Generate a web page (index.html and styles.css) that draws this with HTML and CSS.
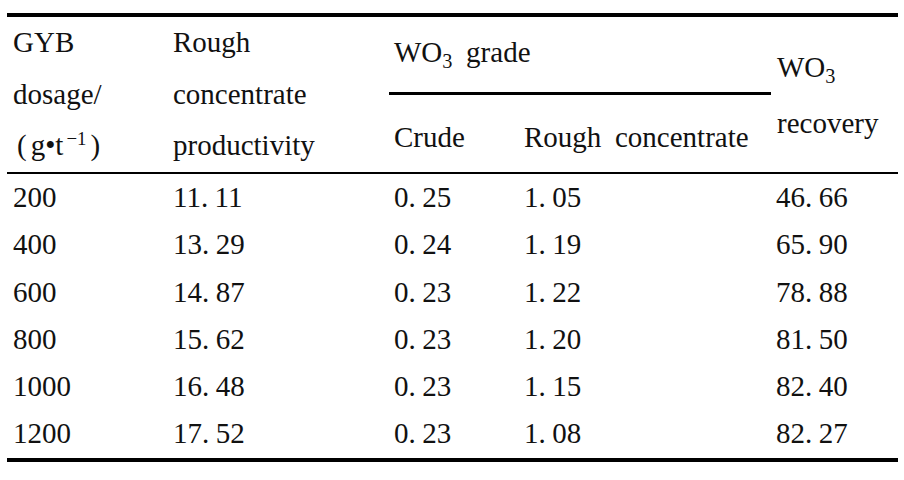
FILE: index.html
```html
<!DOCTYPE html>
<html>
<head>
<meta charset="utf-8">
<link rel="stylesheet" href="styles.css">
</head>
<body>
<div class="sheet">
  <div class="head">
    <div class="cell h-dose">GYB<br>dosage/<br><span class="paren">(</span>g•t<sup>−1</sup><span class="paren">)</span></div>
    <div class="cell h-prod">Rough<br>concentrate<br>productivity</div>
    <div class="cell h-group">WO<sub>3</sub> grade</div>
    <div class="cell h-rec">WO<sub>3</sub><br>recovery</div>
    <div class="cell h-sub h-crude">Crude</div>
    <div class="cell h-sub h-rough">Rough concentrate</div>
  </div>
  <div class="body">
    <div class="cell first">200</div><div class="cell">11<span class="d">.</span>11</div><div class="cell">0<span class="d">.</span>25</div><div class="cell">1<span class="d">.</span>05</div><div class="cell">46<span class="d">.</span>66</div>
    <div class="cell first">400</div><div class="cell">13<span class="d">.</span>29</div><div class="cell">0<span class="d">.</span>24</div><div class="cell">1<span class="d">.</span>19</div><div class="cell">65<span class="d">.</span>90</div>
    <div class="cell first">600</div><div class="cell">14<span class="d">.</span>87</div><div class="cell">0<span class="d">.</span>23</div><div class="cell">1<span class="d">.</span>22</div><div class="cell">78<span class="d">.</span>88</div>
    <div class="cell first">800</div><div class="cell">15<span class="d">.</span>62</div><div class="cell">0<span class="d">.</span>23</div><div class="cell">1<span class="d">.</span>20</div><div class="cell">81<span class="d">.</span>50</div>
    <div class="cell first">1000</div><div class="cell">16<span class="d">.</span>48</div><div class="cell">0<span class="d">.</span>23</div><div class="cell">1<span class="d">.</span>15</div><div class="cell">82<span class="d">.</span>40</div>
    <div class="cell first">1200</div><div class="cell">17<span class="d">.</span>52</div><div class="cell">0<span class="d">.</span>23</div><div class="cell">1<span class="d">.</span>08</div><div class="cell">82<span class="d">.</span>27</div>
  </div>
</div>
</body>
</html>
```

FILE: styles.css
```css
html, body {
  margin: 0;
  padding: 0;
  background: #ffffff;
}

body {
  padding: 13px 6px 0 7px;
  font-family: "Liberation Serif", serif;
  color: #111111;
}

.sheet {
  width: 891px;
  font-family: "Liberation Serif", serif;
  font-size: 29px;
  border-top: 4px solid #000;
  border-bottom: 4px solid #000;
}

.head,
.body {
  display: grid;
  grid-template-columns: 161px 221px 130px 252px 127px;
}

.head {
  grid-template-rows: 78px 77px;
  border-bottom: 2.5px solid #000;
  word-spacing: 0.22em;
}

.body {
  grid-auto-rows: 47.3px;
}

.cell {
  font-family: "Liberation Serif", serif;
  padding-left: 5px;
  white-space: nowrap;
}

.body .cell {
  line-height: 47.3px;
}

.body .first {
  padding-left: 6px;
}

.h-dose,
.h-prod {
  grid-row: 1 / 3;
  line-height: 51.6px;
}

.h-dose {
  grid-column: 1;
  padding-left: 6px;
}

.h-prod {
  grid-column: 2;
}

.h-group {
  grid-column: 3 / 5;
  grid-row: 1;
  line-height: 32px;
  padding-top: 19px;
  border-bottom: 3px solid #000;
}

.h-rec {
  grid-column: 5;
  grid-row: 1 / 3;
  line-height: 56px;
  padding-top: 22px;
  padding-left: 6px;
}

.h-sub {
  grid-row: 2;
  line-height: 32px;
  padding-top: 26px;
}

.h-crude {
  grid-column: 3;
}

.h-rough {
  grid-column: 4;
}

sub {
  font-size: 0.7em;
  vertical-align: -0.3em;
  line-height: 0;
}

sup {
  font-size: 0.65em;
  vertical-align: 0.55em;
  line-height: 0;
  padding-left: 3px;
}

.paren {
  padding: 0 4px;
}

.d {
  margin-right: 0.22em;
}
```
